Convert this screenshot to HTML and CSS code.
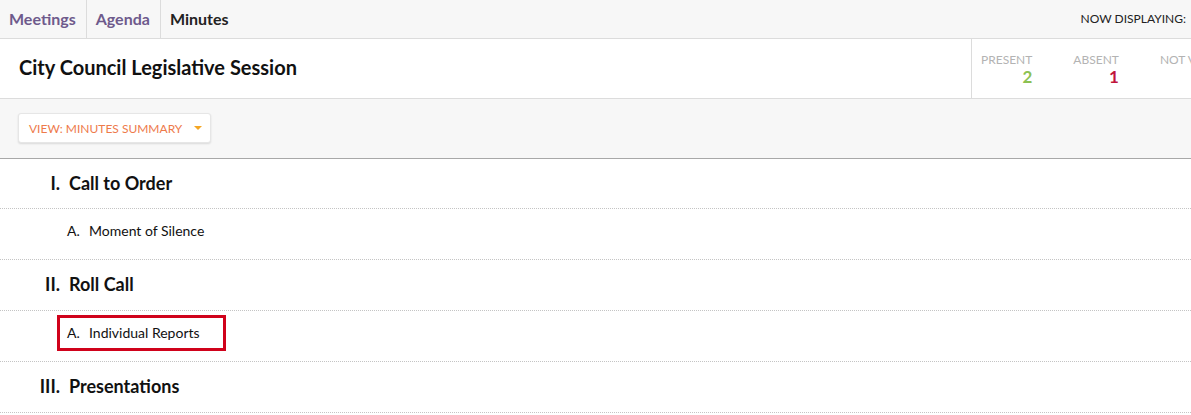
FILE: index.html
```html
<!DOCTYPE html>
<html>
<head>
<meta charset="utf-8">
<link rel="stylesheet" href="styles.css">
</head>
<body>
<nav class="topnav">
  <div class="tabs">
    <a class="tab">Meetings</a>
    <a class="tab">Agenda</a>
    <a class="tab active">Minutes</a>
  </div>
  <div class="now">NOW DISPLAYING:</div>
</nav>
<header class="header">
  <h1 class="title">City Council Legislative Session</h1>
  <div class="stats">
    <div class="stat"><span class="stat-label">PRESENT</span><span class="stat-num green">2</span></div>
    <div class="stat"><span class="stat-label">ABSENT</span><span class="stat-num red">1</span></div>
    <div class="stat"><span class="stat-label">NOT V</span><span class="stat-num"></span></div>
  </div>
</header>
<div class="toolbar">
  <button class="view-btn">VIEW: MINUTES SUMMARY <span class="caret"></span></button>
</div>
<main class="items">
  <div class="row section first"><span class="num">I.</span><span class="txt">Call to Order</span></div>
  <div class="row sub"><div class="sub-inner"><span class="snum">A.</span><span class="stxt">Moment of Silence</span></div></div>
  <div class="row section"><span class="num">II.</span><span class="txt">Roll Call</span></div>
  <div class="row sub"><div class="sub-inner highlight"><span class="snum">A.</span><span class="stxt">Individual Reports</span></div></div>
  <div class="row section"><span class="num">III.</span><span class="txt">Presentations</span></div>
</main>
</body>
</html>
```
FILE: styles.css
```css
* { box-sizing: border-box; }
html, body { margin: 0; padding: 0; }
body {
  font-family: Lato, "Open Sans", sans-serif;
  color: #222;
  background: #fff;
  width: 1191px;
  overflow: hidden;
}
.topnav {
  height: 39px;
  background: #f7f7f7;
  border-bottom: 1px solid #dcdcdc;
  display: flex;
  justify-content: space-between;
  align-items: stretch;
}
.tabs { display: flex; }
.tab {
  display: flex;
  align-items: center;
  padding: 0 10px 2px 9px;
  font-size: 16px;
  font-weight: 700;
  color: #6e5a8c;
  border-right: 1px solid #dcdcdc;
}
.tab.active { color: #222; border-right: none; }
.now {
  display: flex;
  align-items: center;
  font-size: 12px;
  color: #222;
  padding-right: 5px;
  white-space: nowrap;
  padding-bottom: 1px;
}
.header {
  height: 60px;
  display: flex;
  justify-content: space-between;
  border-bottom: 1px solid #dcdcdc;
  background: #fff;
}
.title {
  margin: 0;
  padding-left: 19px;
  font-size: 20px;
  font-weight: 700;
  line-height: 56px;
  color: #111;
}
.stats {
  width: 220px;
  border-left: 1px solid #dcdcdc;
  display: flex;
  padding-left: 9px;
  padding-top: 13px;
  overflow: hidden;
  flex-shrink: 0;
}
.stat {
  display: flex;
  flex-direction: column;
  align-items: flex-end;
  margin-right: 41px;
  flex-shrink: 0;
}
.stat-label {
  font-size: 12px;
  color: #b3b3b3;
  line-height: 15px;
}
.stat-num {
  font-size: 17px;
  font-weight: 700;
  line-height: 20px;
  color: #999;
}
.stat-num.green { color: #8cc152; }
.stat-num.red { color: #c0143c; }
.toolbar {
  height: 60px;
  background: #f7f7f7;
  border-bottom: 1px solid #a8a8a8;
  padding: 14px 18px 0;
}
.view-btn {
  font-family: Lato, sans-serif;
  height: 30px;
  width: 193px;
  background: #fff;
  border: 1px solid #e6e6e6;
  border-radius: 3px;
  box-shadow: 0 1px 2px rgba(0,0,0,0.12);
  color: #ee7a4b;
  font-size: 12px;
  text-align: left;
  padding: 0 0 0 10px;
  display: flex;
  align-items: center;
}
.caret {
  display: inline-block;
  width: 0;
  height: 0;
  border-left: 4px solid transparent;
  border-right: 4px solid transparent;
  border-top: 4px solid #f5a623;
  margin-left: 12px;
}
.items { display: flex; flex-direction: column; }
.row {
  height: 51px;
  border-bottom: 1px dotted #c4c4c4;
  display: flex;
  align-items: center;
}
.row.first { height: 50px; }
.row.sub { align-items: flex-start; }
.section .num {
  width: 60px;
  text-align: right;
  font-size: 18px;
  font-weight: 700;
  color: #111;
  padding-bottom: 2px;
}
.section .txt {
  margin-left: 9px;
  font-size: 18px;
  font-weight: 700;
  color: #111;
  padding-bottom: 2px;
}
.sub-inner {
  margin: 4px 0 0 57px;
  height: 36px;
  width: 169px;
  display: flex;
  align-items: center;
  padding-left: 7px;
  padding-bottom: 2px;
  border: 3px solid transparent;
  font-size: 14px;
  color: #111;
}
.sub-inner.highlight { border-color: #d0021b; }
.snum { width: 22px; }
```
